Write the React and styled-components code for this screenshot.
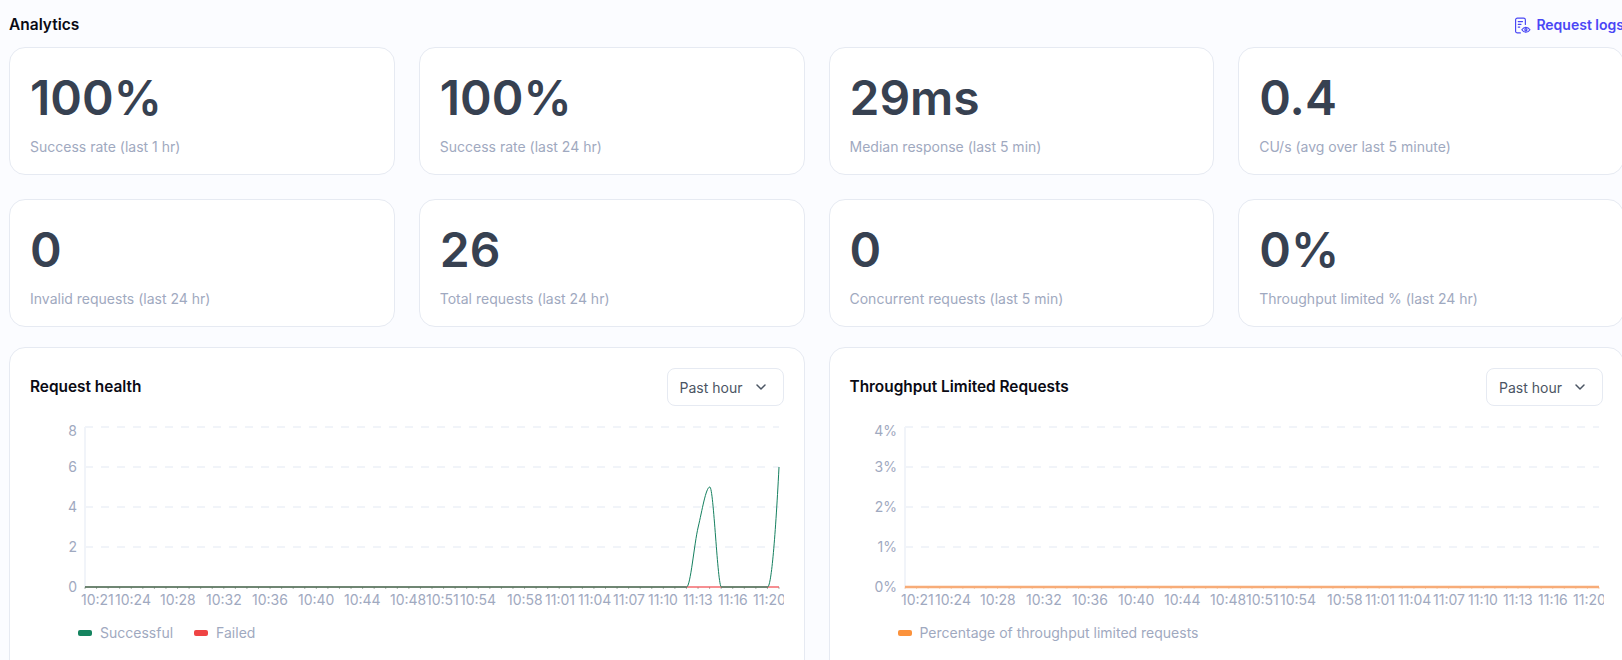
import React from 'react';
import styled, { createGlobalStyle } from 'styled-components';

const GlobalStyle = createGlobalStyle`
  html, body {
    margin: 0;
    height: 660px;
    overflow: hidden;
    background: #fbfcff;
    font-family: Inter, "Noto Sans", sans-serif;
  }
`;

const Page = styled.div`
  width: 1624px;
  padding: 15px 0 0 9px;
  box-sizing: border-box;
`;

const TopBar = styled.div`
  height: 32px;
  display: flex;
  align-items: flex-start;
  justify-content: space-between;
`;

const Heading = styled.h2`
  margin: 0;
  font-size: 15.5px;
  line-height: 20px;
  font-weight: 600;
  color: #0a0a14;
`;

const LogsLink = styled.a`
  display: flex;
  align-items: center;
  gap: 5px;
  font-size: 14px;
  line-height: 20px;
  font-weight: 600;
  color: #4a47f5;
  white-space: nowrap;
`;

const StatGrid = styled.div`
  display: grid;
  grid-template-columns: repeat(4, 1fr);
  grid-auto-rows: 128px;
  column-gap: 24px;
  row-gap: 24px;
`;

const Card = styled.div`
  box-sizing: border-box;
  background: #fff;
  border: 1px solid #e6eaf2;
  border-radius: 16px;
`;

const StatCard = styled(Card)`
  padding: 21px 20px 20px;
`;

const StatValue = styled.div`
  font-size: 48px;
  line-height: 58px;
  font-weight: 600;
  color: #374151;
`;

const StatLabel = styled.div`
  margin-top: 10px;
  font-size: 14px;
  line-height: 20px;
  color: #9fa9c0;
`;

const ChartGrid = styled.div`
  display: grid;
  grid-template-columns: repeat(2, 795.5px);
  column-gap: 24px;
  margin-top: 20px;
`;

const ChartCard = styled(Card)`
  height: 340px;
  padding: 20px;
`;

const ChartHeader = styled.div`
  display: flex;
  align-items: center;
  justify-content: space-between;
`;

const ChartTitle = styled.h3`
  margin: 0 0 2px;
  font-size: 15.4px;
  font-weight: 600;
  color: #0a0a14;
`;

const Dropdown = styled.button`
  width: 117px;
  height: 38px;
  padding: 0 16px 0 12px;
  display: flex;
  align-items: center;
  justify-content: space-between;
  background: #fff;
  border: 1px solid #e6eaf2;
  border-radius: 8px;
  font-family: inherit;
  font-size: 14px;
  color: #4b5563;
`;

const Plot = styled.svg`
  display: block;
  margin-top: 9px;
`;

const AxisText = styled.text`
  font-size: 14px;
  fill: #9fa9c0;
`;

const Legend = styled.div`
  display: flex;
  gap: 21px;
  margin-top: 13px;
  padding-left: 48px;
`;

const LegendItem = styled.div`
  display: flex;
  align-items: center;
  gap: 8px;
  font-size: 14px;
  line-height: 20px;
  color: #9fa9c0;
`;

const Swatch = styled.span`
  width: 14px;
  height: 6px;
  border-radius: 2px;
  background: ${(p) => p.$color};
`;

const stats = [
  ['100%', 'Success rate (last 1 hr)'],
  ['100%', 'Success rate (last 24 hr)'],
  ['29ms', 'Median response (last 5 min)'],
  ['0.4', 'CU/s (avg over last 5 minute)'],
  ['0', 'Invalid requests (last 24 hr)'],
  ['26', 'Total requests (last 24 hr)'],
  ['0', 'Concurrent requests (last 5 min)'],
  ['0%', 'Throughput limited % (last 24 hr)'],
];

// time labels and where each one starts, in px from the card's inner left edge
const timeLabels = [
  ['10:21', 51], ['10:24', 85], ['10:28', 130], ['10:32', 176], ['10:36', 222],
  ['10:40', 268], ['10:44', 314], ['10:48', 360], ['10:51', 396], ['10:54', 430],
  ['10:58', 477], ['11:01', 515], ['11:04', 548], ['11:07', 583], ['11:10', 618],
  ['11:13', 653], ['11:16', 688], ['11:20', 723],
];

const AXIS_X = 55;
const END_X = 749;
const BASE_Y = 172;
const STEP_Y = 40;
const minuteTicks = Array.from({ length: 61 }, (_, i) => AXIS_X + (i * (END_X - AXIS_X)) / 60);

const Chart = ({ yLabels, lines, tickColor }) => (
  <Plot width="754" height="195" viewBox="0 0 754 195">
    {[1, 2, 3, 4].map((n) => (
      <line
        key={n}
        x1={AXIS_X}
        x2={END_X}
        y1={BASE_Y - n * STEP_Y}
        y2={BASE_Y - n * STEP_Y}
        stroke="#f1f4f9"
        strokeWidth="2"
        strokeDasharray="8 8"
      />
    ))}
    <line x1={AXIS_X} x2={AXIS_X} y1={BASE_Y - 160} y2={BASE_Y} stroke="#f1f4f9" strokeWidth="2" />
    {yLabels.map((label, i) => (
      <AxisText key={label} x="47" y={BASE_Y + 5 - i * STEP_Y + (i === 4 ? 4 : 0)} textAnchor="end">
        {label}
      </AxisText>
    ))}
    {minuteTicks.map((x) => (
      <line key={x} x1={x} x2={x} y1={BASE_Y} y2={BASE_Y + 2} stroke={tickColor} strokeWidth="1" opacity="0.45" />
    ))}
    {lines.map((l) => (
      <path key={l.d} d={l.d} fill="none" stroke={l.color} strokeWidth={l.width} opacity={l.opacity} />
    ))}
    {timeLabels.map(([label, x]) => (
      <AxisText key={label} x={x} y="190">{label}</AxisText>
    ))}
  </Plot>
);

const LogsIcon = () => (
  <svg width="17" height="17" viewBox="0 0 16 16" fill="none" stroke="currentColor" strokeWidth="1.1" strokeLinecap="round">
    <path d="M6 15H3.200A1.700 1.700 0 0 1 1.500 13.300V2.700A1.700 1.700 0 0 1 3.200 1H9a1.700 1.700 0 0 1 1.700 1.700V7" />
    <path d="M4 4.300h4M4 6.900h2.600M4 9.500h1.400" />
    <path d="M7.400 12c1-1.600 2.200-2.300 3.800-2.300s2.800.7 3.800 2.300c-1 1.600-2.200 2.300-3.800 2.300s-2.800-.7-3.800-2.300z" />
    <circle cx="11.200" cy="12" r="1" />
  </svg>
);

const Chevron = () => (
  <svg width="12" height="12" viewBox="0 0 12 12" fill="none" stroke="#4b5563" strokeWidth="1.5" strokeLinecap="round" strokeLinejoin="round">
    <path d="M2 4l4 4 4-4" />
  </svg>
);

// page x 686.6 -> 721.4 is the bump, 767.6 -> 779 the last rise
const healthCurve =
  'M656.6 172 C660.5 172 664.3 128 668.2 112 C672 96 675.9 72 679.8 72 C683.7 72 687.5 172 691.4 172 M737.6 172 C741 172 745 130 749 52';
const healthBase = 'M55 172 H656.6 M691.4 172 H737.6';

const App = () => (
  <Page>
    <GlobalStyle />
    <TopBar>
      <Heading>Analytics</Heading>
      <LogsLink>
        <LogsIcon />
        Request logs
      </LogsLink>
    </TopBar>

    <StatGrid>
      {stats.map(([value, label]) => (
        <StatCard key={label}>
          <StatValue>{value}</StatValue>
          <StatLabel>{label}</StatLabel>
        </StatCard>
      ))}
    </StatGrid>

    <ChartGrid>
      <ChartCard>
        <ChartHeader>
          <ChartTitle>Request health</ChartTitle>
          <Dropdown>Past hour <Chevron /></Dropdown>
        </ChartHeader>
        <Chart
          yLabels={['0', '2', '4', '6', '8']}
          tickColor="#3f5f47"
          lines={[
            { d: 'M55 172 H749', color: '#f0444a', width: 2, opacity: 0.6 },
            { d: healthBase, color: '#15805f', width: 2, opacity: 0.6 },
            { d: healthCurve, color: '#15805f', width: 1, opacity: 1 },
          ]}
        />
        <Legend>
          <LegendItem><Swatch $color="#15845f" />Successful</LegendItem>
          <LegendItem><Swatch $color="#ef4444" />Failed</LegendItem>
        </Legend>
      </ChartCard>

      <ChartCard>
        <ChartHeader>
          <ChartTitle>Throughput Limited Requests</ChartTitle>
          <Dropdown>Past hour <Chevron /></Dropdown>
        </ChartHeader>
        <Chart
          yLabels={['0%', '1%', '2%', '3%', '4%']}
          tickColor="#f0a468"
          lines={[{ d: 'M55 172 H749', color: '#f7ac78', width: 2.5, opacity: 1 }]}
        />
        <Legend>
          <LegendItem><Swatch $color="#fb923c" />Percentage of throughput limited requests</LegendItem>
        </Legend>
      </ChartCard>
    </ChartGrid>
  </Page>
);

export default App;
